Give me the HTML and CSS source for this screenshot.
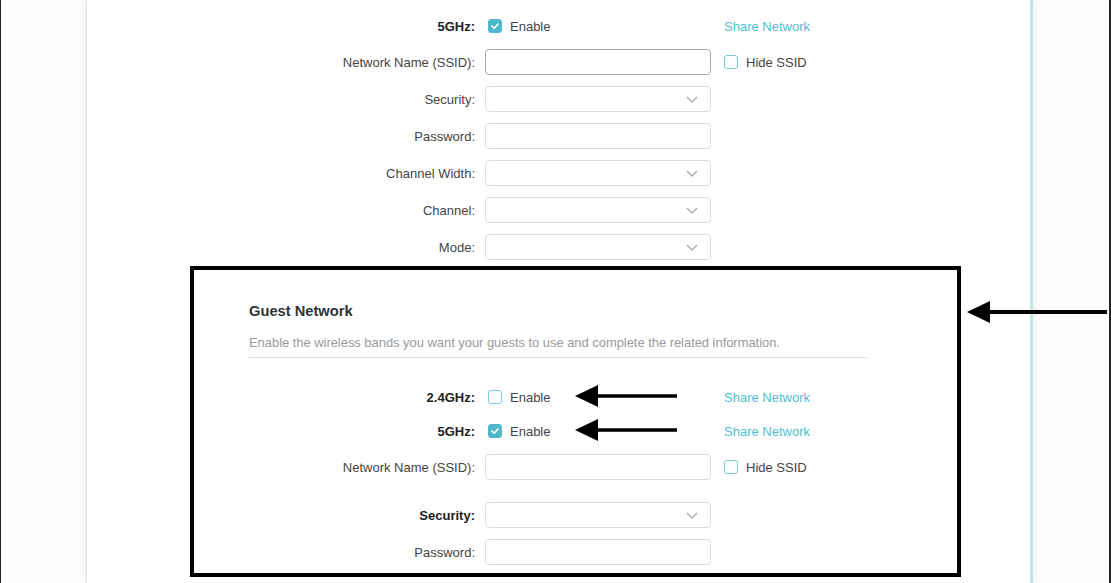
FILE: index.html
```html
<!DOCTYPE html>
<html>
<head>
<meta charset="utf-8">
<link rel="stylesheet" href="styles.css">
</head>
<body>
<div class="frame">
  <div class="card">
    <div class="form">
      <div class="row">
        <div class="label bold">5GHz:</div>
        <div class="control"><span class="cb checked"><svg viewBox="0 0 14 14" width="14" height="14"><polyline points="4,7.2 6.2,9.2 10,5" fill="none" stroke="#fff" stroke-width="1.6" stroke-linecap="round" stroke-linejoin="round"/></svg></span><span class="cb-text">Enable</span></div>
        <div class="extra"><span class="link">Share Network</span></div>
      </div>
      <div class="row g10">
        <div class="label">Network Name (SSID):</div>
        <div class="control"><div class="input focus"></div></div>
        <div class="extra"><span class="cb"></span><span class="cb-text">Hide SSID</span></div>
      </div>
      <div class="row g11">
        <div class="label">Security:</div>
        <div class="control"><div class="input select"><svg class="chev" viewBox="0 0 12 7" width="12" height="7"><polyline points="1,1 6,6 11,1" fill="none" stroke="#b0b0b0" stroke-width="1.5"/></svg></div></div>
      </div>
      <div class="row g11">
        <div class="label">Password:</div>
        <div class="control"><div class="input"></div></div>
      </div>
      <div class="row g11">
        <div class="label">Channel Width:</div>
        <div class="control"><div class="input select"><svg class="chev" viewBox="0 0 12 7" width="12" height="7"><polyline points="1,1 6,6 11,1" fill="none" stroke="#b0b0b0" stroke-width="1.5"/></svg></div></div>
      </div>
      <div class="row g11">
        <div class="label">Channel:</div>
        <div class="control"><div class="input select"><svg class="chev" viewBox="0 0 12 7" width="12" height="7"><polyline points="1,1 6,6 11,1" fill="none" stroke="#b0b0b0" stroke-width="1.5"/></svg></div></div>
      </div>
      <div class="row g11">
        <div class="label">Mode:</div>
        <div class="control"><div class="input select"><svg class="chev" viewBox="0 0 12 7" width="12" height="7"><polyline points="1,1 6,6 11,1" fill="none" stroke="#b0b0b0" stroke-width="1.5"/></svg></div></div>
      </div>

      <div class="guest-head">
        <h2 class="title">Guest Network</h2>
        <p class="desc">Enable the wireless bands you want your guests to use and complete the related information.</p>
        <div class="rule"></div>
      </div>

      <div class="row g26">
        <div class="label bold">2.4GHz:</div>
        <div class="control"><span class="cb"></span><span class="cb-text">Enable</span></div>
        <div class="extra"><span class="link">Share Network</span></div>
      </div>
      <div class="row g8">
        <div class="label bold">5GHz:</div>
        <div class="control"><span class="cb checked"><svg viewBox="0 0 14 14" width="14" height="14"><polyline points="4,7.2 6.2,9.2 10,5" fill="none" stroke="#fff" stroke-width="1.6" stroke-linecap="round" stroke-linejoin="round"/></svg></span><span class="cb-text">Enable</span></div>
        <div class="extra"><span class="link">Share Network</span></div>
      </div>
      <div class="row g10">
        <div class="label">Network Name (SSID):</div>
        <div class="control"><div class="input"></div></div>
        <div class="extra"><span class="cb"></span><span class="cb-text">Hide SSID</span></div>
      </div>
      <div class="row g22">
        <div class="label bold">Security:</div>
        <div class="control"><div class="input select"><svg class="chev" viewBox="0 0 12 7" width="12" height="7"><polyline points="1,1 6,6 11,1" fill="none" stroke="#b0b0b0" stroke-width="1.5"/></svg></div></div>
      </div>
      <div class="row g11">
        <div class="label">Password:</div>
        <div class="control"><div class="input"></div></div>
      </div>
    </div>
  </div>

  <div class="highlight"></div>
  <svg class="arrow arrow-main" width="142" height="24" viewBox="0 0 142 24"><polygon points="0,12 23,1 23,23" fill="#000"/><line x1="20" y1="12" x2="140" y2="12" stroke="#000" stroke-width="4"/></svg>
  <svg class="arrow arrow-a" width="104" height="24" viewBox="0 0 104 24"><polygon points="0,12 23,1 23,23" fill="#000"/><line x1="20" y1="12" x2="102" y2="12" stroke="#000" stroke-width="3.5"/></svg>
  <svg class="arrow arrow-b" width="104" height="24" viewBox="0 0 104 24"><polygon points="0,12 23,1 23,23" fill="#000"/><line x1="20" y1="12" x2="102" y2="12" stroke="#000" stroke-width="3.5"/></svg>
</div>
</body>
</html>
```

FILE: styles.css
```css
* { box-sizing: border-box; }
html, body {
  margin: 0;
  padding: 0;
  width: 1111px;
  height: 583px;
  overflow: hidden;
  background: #fdfdfd;
  font-family: "Liberation Sans", Arial, sans-serif;
  font-size: 13px;
  color: #444;
}
.frame {
  position: relative;
  width: 1111px;
  height: 583px;
  border-left: 1px solid #222;
  border-right: 2px solid #222;
  overflow: hidden;
}
.card {
  margin-left: 85px;
  width: 947px;
  height: 583px;
  background: #fff;
  border-left: 1px solid #e6e6e6;
  border-right: 3px solid #bfe6ec;
  box-shadow: 0 0 9px rgba(0, 0, 0, 0.09);
  padding-top: 13px;
}
.form {
  display: flex;
  flex-direction: column;
}
.row {
  display: flex;
  align-items: center;
  height: 26px;
}
.g8 { margin-top: 8px; }
.g10 { margin-top: 10px; }
.g11 { margin-top: 11px; }
.g22 { margin-top: 22px; }
.g26 { margin-top: 26px; }
.label {
  width: 388px;
  text-align: right;
  color: #444;
  white-space: nowrap;
}
.label.bold {
  font-weight: bold;
  color: #222;
}
.control {
  margin-left: 10px;
  width: 226px;
  display: flex;
  align-items: center;
}
.extra {
  margin-left: 13px;
  display: flex;
  align-items: center;
}
.input {
  position: relative;
  width: 226px;
  height: 26px;
  border: 1px solid #dcdcdc;
  border-radius: 4px;
  background: #fff;
}
.input.focus {
  border-color: #a9a9a9;
}
.chev {
  position: absolute;
  right: 12px;
  top: 9px;
}
.cb {
  display: inline-block;
  width: 14px;
  height: 14px;
  border: 1px solid #7ccad7;
  border-radius: 3px;
  background: #fff;
  flex: none;
}
.control .cb { margin-left: 3px; }
.cb.checked {
  background: #4fb9cb;
  border-color: #4fb9cb;
  position: relative;
}
.cb.checked svg {
  position: absolute;
  left: -1px;
  top: -1px;
}
.cb-text {
  margin-left: 8px;
  color: #444;
}
.link {
  color: #4dbfd1;
}
.guest-head {
  margin-left: 162px;
  margin-top: 42px;
  width: 618px;
}
.title {
  margin: 0;
  font-size: 14.7px;
  line-height: 18px;
  font-weight: bold;
  color: #333;
}
.desc {
  margin: 15px 0 0 0;
  line-height: 16px;
  color: #9a9a9a;
  letter-spacing: -0.05px;
}
.rule {
  margin-top: 6px;
  height: 1px;
  background: #dedede;
}
.highlight {
  position: absolute;
  left: 189px;
  top: 266px;
  width: 771px;
  height: 311px;
  border: 4px solid #000;
}
.arrow {
  position: absolute;
}
.arrow-main { left: 966px; top: 300px; }
.arrow-a { left: 574px; top: 384px; }
.arrow-b { left: 574px; top: 418px; }
```
